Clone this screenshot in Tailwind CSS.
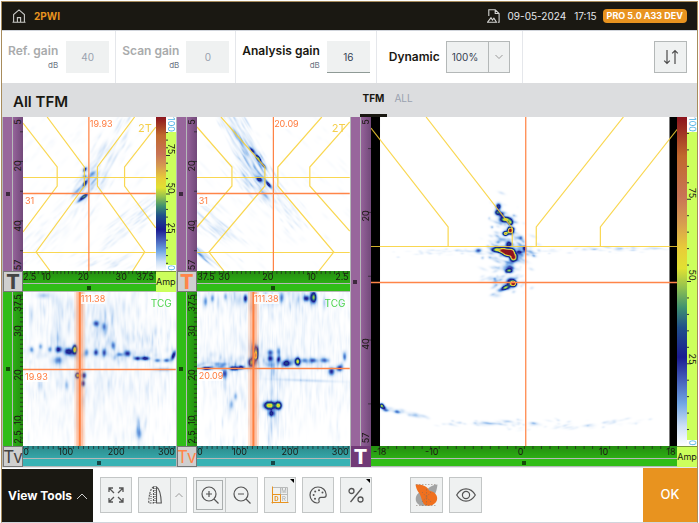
<!DOCTYPE html>
<html lang="en">
<head>
    <meta charset="UTF-8">
    <meta name="viewport" content="width=device-width, initial-scale=1.0">
    <title>All TFM</title>
    <script src="https://cdn.jsdelivr.net/npm/@tailwindcss/browser@4"></script>
</head>
<body class="bg-white font-['Inter','Liberation_Sans',sans-serif] text-[#1a1812]">
    <div class="flex h-screen px-px pt-px">
    <div class="flex min-w-0 flex-1 flex-col border border-[#a88c5c] border-b-gray-300">

        <header class="flex h-7 shrink-0 items-center bg-[#1a1812] px-2.5 text-[10px] text-gray-200">
            <a href="#" aria-label="Home">
                <svg class="size-3.5" viewBox="0 0 14 14" fill="none" stroke="#c9c9c6" stroke-width="1.1"><path d="M0.5 13.2h13M1.6 13V5.6L7 0.9l5.4 4.7V13M5.4 13V8.6h3.2V13"/></svg>
            </a>
            <h2 class="ml-2 font-bold text-[#e8931f]">2PWI</h2>
            <svg class="ml-auto h-3.5 w-[13px]" viewBox="0 0 13 14" fill="none" stroke="#d4d4d2" stroke-width="1.1"><path d="M1.8 7V0.8h6.4l3.9 3.7v8.7H11M8.2 0.8v3.7h3.9M0.5 13.2h9l-2.6-4-1.5 1.8L4 8.8z"/></svg>
            <time class="ml-2">09-05-2024</time>
            <time class="ml-2">17:15</time>
            <span class="ml-1.5 rounded bg-[#e8931f] px-1 text-[9px] leading-3.5 font-bold text-white">PRO 5.0 A33 DEV</span>
        </header>

        <section class="flex h-[53px] shrink-0 border-t border-gray-300 bg-white text-[12px]">
            <div class="flex items-center gap-2 border-r border-gray-200 px-1.5">
                <label for="ref-gain" class="text-right leading-4 font-semibold text-[#a9abac]">Ref. gain<small class="block text-[8px] leading-3 font-normal text-gray-500">dB</small></label>
                <input id="ref-gain" value="40" disabled class="h-8 w-[43px] bg-[#eff1f1] text-center text-[10px] text-gray-400">
            </div>
            <div class="flex items-center gap-[7px] border-r border-gray-200 px-1.5">
                <label for="scan-gain" class="text-right leading-4 font-semibold text-[#a9abac]">Scan gain<small class="block text-[8px] leading-3 font-normal text-gray-500">dB</small></label>
                <input id="scan-gain" value="0" disabled class="h-8 w-[43px] bg-[#eff1f1] text-center text-[10px] text-gray-400">
            </div>
            <div class="flex items-center gap-[7px] border-r border-gray-200 px-1.5">
                <label for="analysis-gain" class="text-right leading-4 font-semibold">Analysis gain<small class="block text-[8px] leading-3 font-normal text-gray-500">dB</small></label>
                <input id="analysis-gain" value="16" class="h-8 w-[43px] border-b border-[#8f9a96] bg-[#eff1f1] text-center text-[10px] text-gray-700">
            </div>
            <div class="flex items-center gap-1.5 border-r border-gray-200 px-3">
                <label for="dynamic" class="font-semibold">Dynamic</label>
                <div class="relative">
                    <select id="dynamic" class="h-8 w-16 appearance-none border border-[#b4b8b8] bg-[#eff1f1] pl-[5px] text-[10px] text-gray-700"><option>100%</option><option>50%</option></select>
                    <span class="pointer-events-none absolute inset-y-0 right-0 flex w-[22px] items-center justify-center border-l border-[#b4b8b8]">
                        <svg class="h-1.5 w-2" viewBox="0 0 8 6" fill="none" stroke="#999"><path d="M0.5 1L4 4.5 7.5 1"/></svg>
                    </span>
                </div>
            </div>
            <div class="ml-auto flex items-center pr-2.5">
                <button aria-label="Swap" class="flex h-8 w-[33px] items-center justify-center border border-[#b4b8b8] bg-[#eff1f1]">
                    <svg class="size-4" viewBox="0 0 16 16" fill="none" stroke="#4a4a4a" stroke-width="1.2"><path d="M4 1v13.5M1.2 11.7L4 14.5l2.8-2.8M12 15V1.5M9.2 4.3L12 1.5l2.8 2.8"/></svg>
                </button>
            </div>
        </section>

        <section class="grid h-[34px] shrink-0 grid-cols-2 bg-[#dcdddf]">
            <h1 class="self-center pt-1 pl-[11px] text-[15px] font-semibold">All TFM</h1>
            <nav class="flex gap-1 pl-2.5 text-[10px]">
                <a href="#" class="border-b-3 border-[#1a1812] px-[3px] pt-2 font-bold">TFM</a>
                <a href="#" class="px-[3px] pt-2 text-gray-400">ALL</a>
            </nav>
        </section>

        <main class="grid min-h-0 flex-1 grid-cols-2 bg-[#b5b8b8]">
            <div id="left" class="grid min-h-0 grid-cols-2 grid-rows-2"></div>
            <div id="right" class="grid min-h-0"></div>
        </main>

        <footer class="flex h-[55px] shrink-0 border-t border-gray-200 bg-white text-[#555]">
            <button class="mt-px flex w-[91px] items-center gap-1 bg-[#1a1812] pl-1.5 text-[12px] font-bold text-white">View Tools
                <svg class="h-2 w-3" viewBox="0 0 12 8" fill="none" stroke="#ccc"><path d="M1 7l5-5 5 5"/></svg>
            </button>
            <div class="flex items-center gap-1.5 pl-[7px]">
                <button aria-label="Full screen" class="flex h-9 w-8 items-center justify-center border border-[#c3c6c6] bg-[#eff1f1]">
                    <svg class="size-4" viewBox="0 0 16 16" fill="none" stroke="currentColor" stroke-width="1.3"><path d="M1 5V1h4M1 1l5 5M11 1h4v4M15 1l-5 5M1 11v4h4M1 15l5-5M15 11v4h-4M15 15l-5-5"/></svg>
                </button>
                <div class="flex">
                    <button aria-label="Mirror" class="flex h-9 w-[33px] items-center justify-center border border-[#c3c6c6] bg-[#eff1f1]">
                        <svg class="h-[18px] w-3.5" viewBox="0 0 14 18" fill="none" stroke="currentColor" stroke-width="1.1"><path stroke-dasharray="2 1" d="M5.5 1v16H0.7C0.9 10 2 3 5.5 1z"/><path d="M8.5 1v16h4.8C13 10 12 3 8.5 1z"/><path stroke-dasharray="1 1" d="M7 0v18M3 8v8"/></svg>
                    </button>
                    <button aria-label="Mirror options" class="-ml-px flex h-9 w-[17px] items-center justify-center border border-[#c3c6c6] bg-[#eff1f1]">
                        <svg class="h-1.5 w-2" viewBox="0 0 8 6" fill="none" stroke="#999"><path d="M0.5 5L4 1.5 7.5 5"/></svg>
                    </button>
                </div>
                <div class="flex">
                    <button aria-label="Zoom in" class="flex h-9 w-[33px] items-center justify-center border border-[#c3c6c6] bg-[#eff1f1] p-[2px]">
                        <span class="flex size-full items-center justify-center border border-[#aaaeae]"><svg class="size-[18px]" viewBox="0 0 18 18" fill="none" stroke="currentColor" stroke-width="1.2"><circle cx="8" cy="8" r="7"/><path d="M13 13l4.5 4.5M8 5v6M5 8h6"/></svg></span>
                    </button>
                    <button aria-label="Zoom out" class="-ml-px flex h-9 w-[33px] items-center justify-center border border-[#c3c6c6] bg-[#eff1f1]">
                        <svg class="size-[18px]" viewBox="0 0 18 18" fill="none" stroke="currentColor" stroke-width="1.2"><circle cx="8" cy="8" r="7"/><path d="M13 13l4.5 4.5M5 8h6"/></svg>
                    </button>
                </div>
                <button aria-label="Layout" class="relative flex h-9 w-8 items-center justify-center border border-[#c3c6c6] bg-[#eff1f1]">
                    <svg class="size-[18px]" viewBox="0 0 18 18" fill="none" stroke="#b9bbbb"><path d="M1 1.5h15.5V16M1 8.5h15.5M9.5 1v15"/><path stroke="#e8931f" d="M1.5 0.5v17M0.5 16.5h17M1.5 8.5h8v8"/><g stroke="none" font-size="6" text-anchor="middle"><text x="13" y="7.2" fill="#a3a5a5">M</text><text x="5.5" y="14.8" font-weight="bold" fill="#e8931f">D</text><text x="13" y="14.8" fill="#a3a5a5">R</text></g></svg>
                    <svg class="absolute top-px right-px size-1" viewBox="0 0 4 4"><path d="M0 0h4v4z"/></svg>
                </button>
                <button aria-label="Palette" class="flex h-9 w-8 items-center justify-center border border-[#c3c6c6] bg-[#eff1f1]">
                    <svg class="size-[18px]" viewBox="0 0 18 18" fill="none" stroke="currentColor" stroke-width="1.2"><path d="M9 1C4.5 1 1 4.5 1 9s3.5 8 7 8c2 0 2.6-1.2 2-2.6-.6-1.6.3-3 2-3h3c1.5 0 2.2-1 2.2-2.6C17.2 4.3 13.5 1 9 1z"/><g fill="currentColor" stroke="none"><circle cx="4.6" cy="9" r="1"/><circle cx="6.2" cy="5.4" r="1"/><circle cx="10" cy="4.2" r="1"/><circle cx="13.5" cy="6.6" r="1"/><circle cx="6" cy="12.8" r="1"/></g></svg>
                </button>
                <button aria-label="Percent" class="relative flex h-9 w-8 items-center justify-center border border-[#c3c6c6] bg-[#eff1f1]">
                    <svg class="size-4" viewBox="0 0 16 16" fill="none" stroke="currentColor" stroke-width="1.3"><circle cx="3.5" cy="4" r="2.5"/><circle cx="12.5" cy="12.5" r="2.5"/><path d="M14 1L2.5 15"/></svg>
                    <svg class="absolute top-px right-px size-1" viewBox="0 0 4 4"><path d="M0 0h4v4z"/></svg>
                </button>
                <button aria-label="Weld overlay" class="ml-8 flex h-9 w-[33px] items-center justify-center border border-[#c3c6c6] bg-[#eff1f1]">
                    <svg class="h-6 w-[23px]" viewBox="0 0 23 24" fill="none"><path fill="#a2a3a3" d="M22.5 1.5C18 2 14 3.500 12 7l7 6c2-3 3-7 3.500-11.500zM5 9c-5 3-5 8-3 11 2.500 3 7 3.500 11 2L9 12z"/><path fill="#f0701e" d="M0.500 1.500C7 1.500 12 2.500 14 7.500c4 1 7.500 3 8 6.500.8 3.500-1.500 6.500-4.500 8-2.500 1.200-6.500 1-8-.5C6.500 19 6.500 13 4 10 2 7.500 1 4.500 0.500 1.500z"/><path stroke="#776a60" stroke-opacity=".7" stroke-width=".7" stroke-dasharray="1.500 1.500" d="M1 1.500h21M1 22.500h21M11.500 6v16M7 19l9-10M7 9l9 10"/></svg>
                </button>
                <button aria-label="Show" class="flex h-9 w-[33px] items-center justify-center border border-[#c3c6c6] bg-[#eff1f1]">
                    <svg class="h-3.5 w-5" viewBox="0 0 20 14" fill="none" stroke="currentColor" stroke-width="1.2"><path d="M0.7 7C3 3 6.3 0.9 10 0.9S17 3 19.3 7C17 11 13.7 13.1 10 13.1S3 11 0.7 7z"/><circle cx="10" cy="7" r="3.6"/></svg>
                </button>
            </div>
            <button class="ml-auto w-[54px] bg-[#e8931f] text-[13px] font-medium text-white">OK</button>
        </footer>
    </div>
    </div>

    <script>
        // Colour scale: amplitude 0..1 -> rgb
        const palette = [
            [0, 255, 255, 255], [0.06, 205, 224, 246], [0.13, 112, 165, 228], [0.25, 27, 27, 145],
            [0.36, 32, 80, 130], [0.42, 63, 144, 112], [0.48, 143, 192, 80], [0.54, 225, 225, 50],
            [0.6, 232, 205, 56], [0.68, 214, 155, 80], [0.76, 200, 115, 85], [0.86, 192, 75, 45], [1, 140, 20, 30]
        ];

        function colorOf(v) {
            v = Math.max(0, Math.min(1, v));
            let i = 1;
            while (palette[i][0] < v) i++;
            const a = palette[i - 1], b = palette[i];
            const t = (v - a[0]) / (b[0] - a[0]);
            return [1, 2, 3].map(k => a[k] + (b[k] - a[k]) * t);
        }

        let seed = 7;
        function rand() {
            seed = (seed * 16807) % 2147483647;
            return seed / 2147483647;
        }
        const gauss = () => rand() + rand() + rand() + rand() - 2;

        // blob: [x, y, amplitude, rx, ry, angle]
        // cloud: [count, x, y, spreadX, spreadY, cloudAngle, rx, ry, angle, amplitude]
        function drawHeat(canvas, blobs, clouds) {
            const w = canvas.width, h = canvas.height;
            const field = new Float32Array(w * h);

            function add([x, y, amp, rx, ry = rx, deg = 0]) {
                const c = Math.cos(deg * Math.PI / 180), s = Math.sin(deg * Math.PI / 180);
                const r = Math.ceil(Math.max(rx, ry) * 2.5);
                for (let j = Math.max(0, Math.floor(y - r)); j < Math.min(h, y + r); j++) {
                    for (let i = Math.max(0, Math.floor(x - r)); i < Math.min(w, x + r); i++) {
                        const u = ((i - x) * c + (j - y) * s) / rx;
                        const v = ((j - y) * c - (i - x) * s) / ry;
                        field[j * w + i] += amp * Math.exp(-(u * u + v * v));
                    }
                }
            }

            for (const [n, x, y, sx, sy, a, rx, ry, deg, amp] of clouds) {
                const c = Math.cos(a * Math.PI / 180), s = Math.sin(a * Math.PI / 180);
                for (let k = 0; k < n; k++) {
                    const p = gauss() * sx, q = gauss() * sy;
                    add([x + p * c - q * s, y + p * s + q * c, amp * rand(), rx * (0.5 + rand()), ry, deg]);
                }
            }
            blobs.forEach(add);

            const ctx = canvas.getContext('2d');
            const img = ctx.createImageData(w, h);
            for (let k = 0; k < w * h; k++) {
                const [r, g, b] = colorOf(field[k]);
                img.data.set([r, g, b, 255], k * 4);
            }
            ctx.putImageData(img, 0, 0);
        }

        const purple = { bar: 'bg-[#98669c]', ruler: 'bg-linear-to-r from-[#95639a] to-[#72497a]' };
        const green = { bar: 'bg-[#30bd17]', ruler: 'bg-linear-to-r from-[#2cae14] to-[#248d10]' };
        const greenX = { bar: 'bg-[#30bd17]', ruler: 'bg-linear-to-b from-[#248d10] to-[#2cae14]' };
        const tealX = { bar: 'bg-[#38b2b4]', ruler: 'bg-linear-to-b from-[#2b8a8b] to-[#35a6a8]' };

        const panels = [
            {
                host: 'left', w: 132, h: 154, y: purple, x: greenX, tag: 'T', scale: [21, 46, 72],
                tagClass: 'bg-[#cfcfcf] text-[#444] text-[20px] font-extrabold border border-[#777]',
                yLabels: [['5', 3], ['20', 32], ['40', 71], ['57', 96]], yTick: [9.6, 19.3],
                xLabels: [['2.5', 5], ['10', 17.5], ['20', 45.5], ['30', 74], ['37.5', 92]], xTick: [3, 2.84],
                lines: 'M0 6L34 50V69L0 115M24 0L61 50V69L13 135L27 154M111 0L74 50V69L121 135L109 154M132 10L101 50V69L132 111M0 60.5H132M0 135.5H132',
                cx: 65.5, cy: 76.5, topText: '19.93', sideText: '31', mark: '2T',
                blobs: [[61, 52, .3, 2.5, 1.3, -60], [61, 66, .32, 3, 1.4, -60], [61, 59, .14, 2, 2], [60, 79, .4, 4, 1.5, -35], [56, 83, .15, 4, 1.5, -35], [69, 56, .1, 4, 2, -40], [53, 74, .07, 5, 2, -50]],
                clouds: [[150, 76, 48, 42, 11, -62, 5, 1, -60, .026], [90, 62, 65, 18, 9, -50, 4, 1, -50, .03], [110, 112, 100, 40, 9, -40, 5, 1, -38, .022], [90, 22, 118, 34, 14, -50, 5, 1, -45, .012], [200, 66, 50, 75, 75, 0, 5, 1.5, -50, .008], [50, 85, 145, 40, 6, 0, 4, 1, -30, .022]]
            },
            {
                host: 'left', w: 153, h: 154, y: purple, x: greenX, tag: 'T',
                tagClass: 'bg-[#cfcfcf] text-[#ff8548] text-[20px] font-extrabold border border-[#777]',
                yLabels: [['5', 3], ['20', 32], ['40', 71], ['57', 96]], yTick: [9.6, 19.3],
                xLabels: [['37.5', 6], ['30', 18], ['20', 46.5], ['10', 75], ['2.5', 95]], xTick: [3, 2.9],
                lines: 'M0 10L35 50V69L0 110M24 0L68 50V69L12 135L27 154M125 0L81 50V69L137 135L122 154M153 5L113 50V69L153 114M0 60.5H153M0 135.5H153',
                cx: 76.5, cy: 76.5, topText: '20.09', sideText: '31', mark: '2T',
                blobs: [[55, 33, .24, 4, 1.5, 50], [61, 41, .48, 4, 1.6, 55], [66, 48, .24, 4, 1.5, 50], [62, 62, .28, 3, 2, 30], [71, 67, .26, 4, 1.5, 50], [68, 78, .1, 6, 2, 50]],
                clouds: [[220, 49, 32, 44, 11, 62, 6, 1, 60, .03], [120, 58, 63, 22, 14, 40, 5, 1, 50, .03], [110, 14, 108, 30, 14, 40, 6, 1, 40, .024], [16, 5, 138, 10, 4, 40, 6, 1, 40, .06], [50, 90, 92, 24, 10, 55, 4, 1, 50, .022], [220, 76, 77, 80, 80, 0, 5, 1.5, 45, .008]]
            },
            {
                host: 'left', w: 152, h: 154, y: green, x: tealX, tag: 'Tv',
                tagClass: 'bg-[#cfcfcf] text-[#444] text-[17px] border border-[#777]',
                yLabels: [['37.5', 7], ['30', 25], ['20', 54], ['10', 83], ['2.5', 94]], yTick: [2, 2.9],
                xLabels: [['0', 2], ['100', 28], ['200', 61], ['300', 94]], xTick: [0, 3.3],
                lines: '', cx: 56.5, cy: 77.5, band: true, topText: '111.38', sideText: '19.93', mark: 'TCG',
                blobs: [[8, 57, .13, 2, 3], [17, 54, .11, 2, 3], [26, 57, .11, 2, 3], [35, 57, .24, 3, 3], [45, 59, .28, 4, 3.5], [51, 57, .62, 2, 4], [63, 60, .12, 2, 4], [72, 60, .16, 2, 3], [80, 60, .18, 2, 4], [89, 53, .16, 2, 4], [96, 62, .12, 3, 2], [103, 61, .18, 3, 3], [113, 66, .22, 3, 2], [121, 66, .27, 4, 2], [133, 68, .15, 3, 2], [142, 68, .17, 3, 2], [149, 63, .28, 2, 5, 20], [72, 31, .18, 3, 3], [80, 34, .15, 2, 4], [34, 68, .12, 5, 4], [54, 83, .55, 2, 2.5], [60, 83, .26, 2, 3], [59, 91, .22, 2, 3], [43, 93, .08, 2, 5], [16, 93, .06, 2, 6], [139, 77, .08, 8, 2], [114, 141, .09, 3, 6], [114, 128, .06, 2, 5], [8, 22, .05, 2, 8], [20, 3, .08, 6, 3]],
                clouds: [[2600, 76, 66, 95, 90, 0, 1, 6, 0, .012], [160, 60, 20, 65, 18, 0, 1, 6, 0, .025], [90, 114, 46, 30, 9, 0, 1, 4, 0, .028], [70, 78, 42, 10, 16, 0, 1, 4, 0, .035], [60, 34, 40, 6, 34, 0, 1, 6, 0, .03], [70, 55, 95, 60, 9, 0, 1, 5, 0, .025], [100, 80, 62, 80, 5, 0, 2, 3, 0, .035], [20, 114, 140, 7, 14, 0, 1, 5, 0, .04]]
            },
            {
                host: 'left', w: 153, h: 154, y: green, x: tealX, tag: 'Tv',
                tagClass: 'bg-[#cfcfcf] text-[#ff8548] text-[17px] border border-[#777]',
                yLabels: [['37.5', 7], ['30', 25], ['20', 54], ['10', 83], ['2.5', 94]], yTick: [2, 2.9],
                xLabels: [['0', 2], ['100', 28], ['200', 61], ['300', 94]], xTick: [0, 3.3],
                lines: '', cx: 56.5, cy: 76.5, band: true, topText: '111.38', sideText: '20.09', mark: 'TCG',
                blobs: [[54, 70, .4, 3, 4], [58, 63, .6, 2, 4], [58, 57, .2, 2, 4], [73, 60, .18, 3, 3], [73, 66, .22, 3, 3], [81, 59, .12, 2, 4], [81, 67, .15, 2, 3], [89, 71, .3, 4, 3], [100, 69, .48, 2.5, 3.5], [107, 68, .14, 3, 2.5], [116, 68, .16, 4, 2.5], [127, 68, .16, 4, 2.5], [9, 76, .34, 4, 1.5], [37, 76, .34, 4, 2], [44, 75, .26, 3, 2], [27, 81, .2, 3, 5], [134, 79, .24, 3, 4], [142, 76, .24, 3, 3], [147, 64, .14, 2, 4], [116, 5, .45, 2.5, 5], [109, 6, .24, 3, 3], [48, 6, .26, 2, 4], [8, 9, .13, 2, 5], [15, 6, .12, 2, 4], [28, 4, .1, 2, 4], [84, 5, .12, 2, 5], [72, 113, .6, 5, 3.5], [81, 113, .55, 3, 3.5], [74, 121, .26, 3, 3], [34, 112, .1, 2, 5], [38, 104, .1, 2, 4], [110, 88, .05, 30, 1.5, 2]],
                clouds: [[2600, 76, 56, 95, 90, 0, 1, 6, 0, .012], [170, 76, 6, 80, 11, 0, 1.5, 5, 0, .032], [110, 76, 70, 80, 7, 0, 2, 3, 0, .036], [30, 57, 62, 5, 14, 0, 1, 5, 0, .06], [80, 76, 115, 10, 44, 0, 1, 7, 0, .028], [50, 32, 105, 12, 30, 0, 1, 5, 0, .025], [40, 20, 73, 24, 3, 0, 3, 2, 0, .05]]
            },
            {
                host: 'right', w: 306, h: 329, y: purple, x: greenX, tag: 'T', scale: [23, 48, 73.5], walls: true,
                tagClass: 'bg-[#713a77] text-white text-[20px] font-extrabold',
                yLabels: [['5', 1.5], ['20', 30], ['40', 69], ['57', 97.5]], yTick: [9.6, 19.4],
                xLabels: [['-18', 3], ['-10', 20], ['0', 49], ['10', 76], ['18', 98]], xTick: [2.8, 2.78],
                lines: 'M0 11L77 110V129M55 0L141 111V129M252 0L165 110V129M306 12L229 110V129M0 129.5H306',
                cx: 154.5, cy: 165.5,
                blobs: [[127, 89, .34, 2.5, 3], [126, 95, .4, 2.5, 2.5], [130, 97, .3, 2.5, 2.5], [134, 102, .6, 5, 2.5], [139, 105, .45, 2.5, 2.5], [139, 113, 1.1, 2.5, 2.5], [134, 116, .7, 2.5, 2], [137, 127, .3, 3, 3], [125, 132, .5, 3.5, 2.5], [131, 133, .9, 3.5, 2.5], [136, 135, 1.2, 4, 3], [140, 135, .9, 3, 3], [142, 140, 1, 3, 3], [107, 133, .2, 3, 2], [148, 134, .14, 3, 4], [153, 131, .26, 2, 3], [138, 153, .45, 3, 2], [134, 150, .1, 4, 3], [142, 166, 1, 2.5, 2.5], [139, 165, .3, 4, 4], [134, 170, .5, 4, 2, -20], [128, 173, .1, 3, 2], [149, 121, .12, 4, 2, 30], [125, 178, .05, 4, 2], [10, 288, .4, 2, 2, 40], [12, 290, .26, 3, 2, 40], [15, 293, .13, 3, 1.5], [117, 306, .06, 5, 1.5, 10], [162, 306, .07, 4, 1.5]],
                clouds: [[90, 137, 116, 13, 32, -20, 2.5, 1.5, 20, .06], [110, 138, 136, 24, 14, 0, 3, 1.5, 20, .07], [60, 136, 164, 18, 10, 0, 2.5, 1.5, -20, .06], [70, 95, 134, 80, 3, 0, 3, 1, 0, .03], [60, 240, 132, 60, 3, 0, 3, 1, 0, .035], [30, 30, 294, 24, 2, 12, 3, 1.5, 10, .04], [70, 125, 306, 50, 3, 0, 3, 1.2, 10, .035], [55, 210, 307, 55, 3, -3, 3, 1.2, -10, .03]]
            }
        ];

        // Ruler ticks along one side
        function ticks([start, step], vertical) {
            let out = '';
            for (let p = start; p <= 100; p += step) {
                out += vertical
                    ? `<line x1="70%" x2="100%" y1="${p}%" y2="${p}%"/>`
                    : `<line x1="${p}%" x2="${p}%" y1="0" y2="25%"/>`;
            }
            return `<svg class="absolute inset-0 size-full" stroke="#222" stroke-opacity="0.7" aria-hidden="true">${out}</svg>`;
        }

        function scaleBar(p) {
            if (!p.scale) return '';
            let marks = '';
            for (let v = 5; v < 100; v += 5) marks += `<line x1="0" x2="${v % 25 ? 2 : 4}" y1="${v}%" y2="${v}%"/>`;
            return `
                <div class="flex min-h-0">
                    <div class="w-2.5 bg-[linear-gradient(to_top,#ffffff_0%,#cde0f6_6%,#70a5e4_13%,#1b1b91_27%,#20508a_36%,#3f9070_42%,#8fc050_48%,#e1e132_54%,#e8cd38_60%,#d69b50_68%,#c87355_76%,#c0692d_88%,#8c141e_100%)]"></div>
                    <div class="relative flex-1 overflow-hidden bg-[#ccff5c] text-[9px] leading-2.5">
                        <svg class="absolute inset-0 size-full" stroke="#333" aria-hidden="true">${marks}</svg>
                        <span class="absolute top-0 right-0 bg-white text-[#4fb4e6] [writing-mode:vertical-rl]">100</span>
                        ${['75', '50', '25'].map((t, i) => `<span class="absolute right-0 -translate-y-1/2 [writing-mode:vertical-rl]" style="top:${p.scale[i]}%">${t}</span>`).join('')}
                        <span class="absolute right-0 bottom-0 bg-white text-[#4fb4e6] [writing-mode:vertical-rl]">0</span>
                    </div>
                </div>`;
        }

        function panelHtml(p) {
            const cols = p.scale ? 'grid-cols-[20px_minmax(0,1fr)_20px]' : 'grid-cols-[20px_minmax(0,1fr)]';
            const px = p.cx / p.w * 100, py = p.cy / p.h * 100;
            const markClass = p.mark === 'TCG' ? 'text-[#4cd44c] text-[10px]' : 'text-[#f5cf4a] text-[11px]';
            return `
            <section class="grid min-h-0 min-w-0 ${cols} grid-rows-[minmax(0,1fr)_21px] pl-px">
                <div class="flex min-h-0 gap-px">
                    <div class="flex w-[9px] items-center justify-center ${p.y.bar}"><i class="size-1 bg-black/60"></i></div>
                    <div class="relative flex-1 overflow-hidden text-[9px] leading-2.5 ${p.y.ruler}">
                        ${ticks(p.yTick, true)}
                        ${p.yLabels.map(([t, at]) => `<span class="absolute left-0 -translate-y-1/2 rotate-180 [writing-mode:vertical-rl]" style="top:${at}%">${t}</span>`).join('')}
                    </div>
                </div>
                <div class="relative min-h-0 overflow-hidden bg-white text-[9px] leading-2.5 text-[#ff7a3c]">
                    <canvas width="${p.w}" height="${p.h}" class="absolute inset-0 size-full"></canvas>
                    <svg class="absolute inset-0 size-full" viewBox="0 0 ${p.w} ${p.h}" preserveAspectRatio="none" fill="none" aria-hidden="true">
                        ${p.walls ? `<path fill="#000" d="M0 0h9v${p.h}H0zM298 0h8v${p.h}h-8z"/>` : ''}
                        <path stroke="#f8d032" stroke-opacity="0.85" stroke-width="1.2" d="${p.lines}"/>
                        ${p.band ? `<path stroke="#ff8548" stroke-opacity="0.2" stroke-width="11" d="M${p.cx} 0V${p.h}"/><path stroke="#ff8548" stroke-opacity="0.35" stroke-width="7" d="M${p.cx} 0V${p.h}"/>` : ''}
                        <path stroke="#ff8040" stroke-width="${p.band ? 2 : 1.2}" d="M${p.cx} 0V${p.h}"/>
                        <path stroke="#ff8548" stroke-width="1.3" d="M0 ${p.cy}H${p.w}"/>
                    </svg>
                    ${p.topText ? `<span class="absolute top-0.5 ml-px bg-white/80" style="left:${px}%">${p.topText}</span>` : ''}
                    ${p.sideText ? `<span class="absolute left-0.5 mt-0.5 bg-white/80" style="top:${py}%">${p.sideText}</span>` : ''}
                    ${p.mark ? `<span class="absolute top-1.5 right-1 ${markClass}">${p.mark}</span>` : ''}
                </div>
                ${scaleBar(p)}
                <div class="flex items-center justify-center leading-5 ${p.tagClass}">${p.tag}</div>
                <div class="flex flex-col gap-px pb-px">
                    <div class="relative flex-1 overflow-hidden text-[9px] leading-3 ${p.x.ruler}">
                        ${ticks(p.xTick, false)}
                        ${p.xLabels.map(([t, at]) => `<span class="absolute top-0 -translate-x-1/2" style="left:${at}%">${t}</span>`).join('')}
                    </div>
                    <div class="flex h-[7px] items-center justify-center ${p.x.bar}"><i class="size-1 bg-black/60"></i></div>
                </div>
                ${p.scale ? '<div class="flex items-center justify-center border-t border-[#7a9a3a] bg-[#ccff5c] text-[9px]">Amp</div>' : ''}
            </section>`;
        }

        for (const p of panels) {
            const host = document.getElementById(p.host);
            host.insertAdjacentHTML('beforeend', panelHtml(p));
            drawHeat(host.lastElementChild.querySelector('canvas'), p.blobs, p.clouds);
        }
    </script>
</body>
</html>
